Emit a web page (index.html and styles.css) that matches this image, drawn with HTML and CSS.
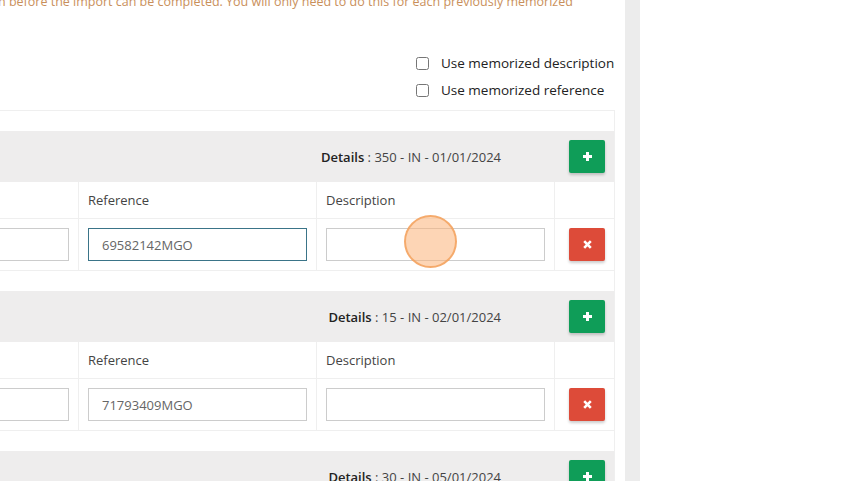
FILE: index.html
```html
<!DOCTYPE html>
<html lang="en">
<head>
  <meta charset="UTF-8" />
  <title>Import - Memorized entries</title>
  <link rel="stylesheet" href="styles.css">
</head>
<body>
  <div class="page">
    <div class="panel">
      <p class="note">n before the import can be completed. You will only need to do this for each previously memorized</p>

      <div class="options">
        <label class="option"><input type="checkbox"> Use memorized description</label>
        <label class="option"><input type="checkbox"> Use memorized reference</label>
      </div>

      <div class="entries">
        <div class="entry">
          <div class="entry-head">
            <span class="details"><b>Details</b> : 350 - IN - 01/01/2024</span>
            <button class="btn btn-add" title="Add">
              <svg width="11" height="11" viewBox="0 0 11 11"><path d="M5.5 1v9M1 5.5h9" stroke="#fff" stroke-width="3"/></svg>
            </button>
          </div>
          <div class="entry-grid">
            <div class="cell cell-head"></div>
            <div class="cell cell-head">Reference</div>
            <div class="cell cell-head">Description</div>
            <div class="cell cell-head"></div>
            <div class="cell cell-first"><input class="field" type="text"></div>
            <div class="cell"><input class="field is-focused" type="text" value="69582142MGO"></div>
            <div class="cell"><input class="field" type="text"></div>
            <div class="cell cell-action">
              <button class="btn btn-remove" title="Remove">
                <svg width="9" height="9" viewBox="0 0 9 9"><path d="M1.2 1.2l6.6 6.6M7.8 1.2l-6.6 6.6" stroke="#fff" stroke-width="2.6"/></svg>
              </button>
            </div>
          </div>
        </div>

        <div class="entry">
          <div class="entry-head">
            <span class="details"><b>Details</b> : 15 - IN - 02/01/2024</span>
            <button class="btn btn-add" title="Add">
              <svg width="11" height="11" viewBox="0 0 11 11"><path d="M5.5 1v9M1 5.5h9" stroke="#fff" stroke-width="3"/></svg>
            </button>
          </div>
          <div class="entry-grid">
            <div class="cell cell-head"></div>
            <div class="cell cell-head">Reference</div>
            <div class="cell cell-head">Description</div>
            <div class="cell cell-head"></div>
            <div class="cell cell-first"><input class="field" type="text"></div>
            <div class="cell"><input class="field" type="text" value="71793409MGO"></div>
            <div class="cell"><input class="field" type="text"></div>
            <div class="cell cell-action">
              <button class="btn btn-remove" title="Remove">
                <svg width="9" height="9" viewBox="0 0 9 9"><path d="M1.2 1.2l6.6 6.6M7.8 1.2l-6.6 6.6" stroke="#fff" stroke-width="2.6"/></svg>
              </button>
            </div>
          </div>
        </div>

        <div class="entry">
          <div class="entry-head">
            <span class="details"><b>Details</b> : 30 - IN - 05/01/2024</span>
            <button class="btn btn-add" title="Add">
              <svg width="11" height="11" viewBox="0 0 11 11"><path d="M5.5 1v9M1 5.5h9" stroke="#fff" stroke-width="3"/></svg>
            </button>
          </div>
        </div>
      </div>
    </div>
    <div class="scrollbar"></div>
  </div>

  <!-- click marker -->
  <div class="click-dot"></div>
</body>
</html>
```

FILE: styles.css
```css
:root {
  --head-bg: #eeeded;
  --line: #efefef;
  --green: #0f9d58;
  --red: #dd4b39;
}

body {
  margin: 0;
  font-family: 'Open Sans', sans-serif;
  font-size: 13px;
  color: #333;
  background: #fff;
  overflow: hidden;
}

.page {
  display: flex;
  height: 481px;
}

.panel {
  width: 615px;
  overflow: hidden;
}

.scrollbar {
  width: 15px;
  margin-left: 10px;
  background: #ececec;
}

.note {
  margin: -7px 0 0 -2px;
  font-size: 12.5px;
  line-height: 18px;
  color: #c98f5b;
  white-space: nowrap;
}

.options {
  display: flex;
  flex-direction: column;
  align-items: flex-start;
  margin: 43px 0 0 416px;
  gap: 9px;
}

.option {
  display: flex;
  align-items: center;
  gap: 12px;
  font-size: 13.5px;
  line-height: 18px;
  color: #222;
  white-space: nowrap;
}

.option input {
  margin: 0;
  width: 13px;
  height: 13px;
}

.entries {
  margin-top: 11px;
  border-top: 1px solid var(--line);
  border-right: 1px solid var(--line);
}

.entry {
  padding-top: 20px;
}

.entry-head {
  display: flex;
  justify-content: flex-end;
  align-items: center;
  height: 51px;
  padding-right: 9px;
  background: var(--head-bg);
}

.details {
  margin-right: 68px;
  color: #444;
}

.details b {
  font-weight: 600;
  color: #222;
}

.btn {
  display: flex;
  align-items: center;
  justify-content: center;
  width: 36px;
  height: 33px;
  border: none;
  border-radius: 2px;
  padding: 0;
  cursor: pointer;
  box-shadow: 0 2px 3px rgba(0,0,0,0.2);
}

.btn-add {
  background: var(--green);
}

.btn-remove {
  background: var(--red);
}

.entry-grid {
  display: grid;
  grid-template-columns: 79px 238px 238px 1fr;
}

.cell {
  padding: 9px;
  border-right: 1px solid var(--line);
  border-bottom: 1px solid var(--line);
}

.cell:nth-child(4n) {
  border-right: none;
}

.cell-head {
  height: 19px;
  padding: 9px 9px 8px;
  line-height: 19px;
  color: #444;
}

.cell-first {
  padding-left: 0;
}

.cell-first .field {
  margin-left: -20px;
  width: calc(100% + 20px);
}

.cell-action {
  display: flex;
  justify-content: flex-end;
  padding-right: 9px;
}

.field {
  display: block;
  box-sizing: border-box;
  width: 100%;
  height: 33px;
  padding: 0 13px;
  border: 1px solid #ccc;
  font-family: 'Open Sans', sans-serif;
  font-size: 13px;
  color: #666;
  outline: none;
  background: #fff;
}

.field.is-focused {
  border-color: #3a7488;
}

.click-dot {
  position: absolute;
  left: 404px;
  top: 215px;
  width: 49px;
  height: 49px;
  border-radius: 50%;
  background: rgba(252, 178, 120, 0.55);
  border: 2px solid rgba(242, 160, 90, 0.8);
}
```
